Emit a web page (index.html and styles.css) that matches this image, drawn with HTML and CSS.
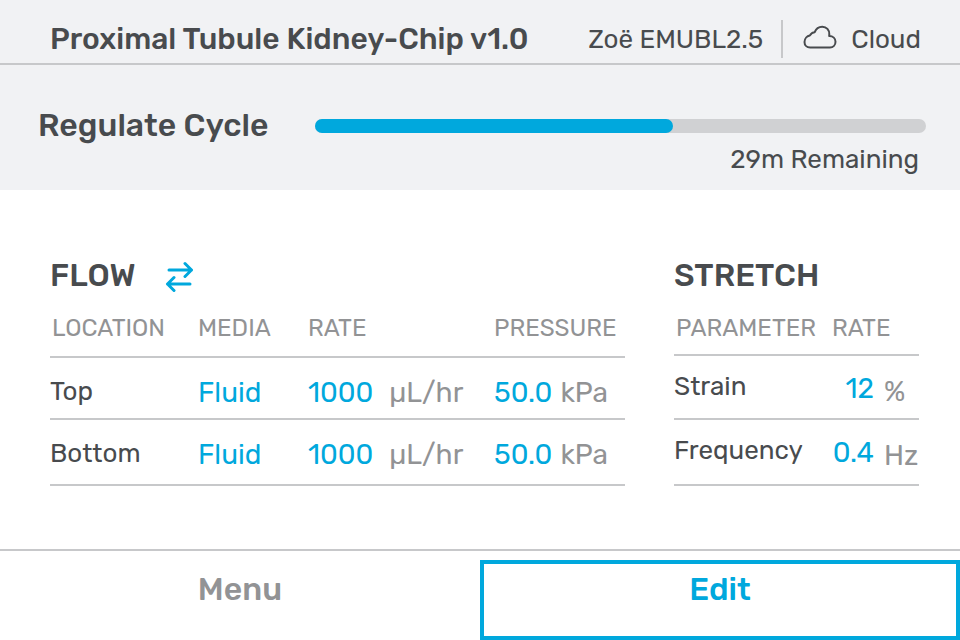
FILE: index.html
```html
<!DOCTYPE html>
<html lang="en">
<head>
<meta charset="utf-8">
<title>Proximal Tubule Kidney-Chip</title>
<link rel="stylesheet" href="styles.css">
</head>
<body>
<header class="topbar">
  <h1 class="chip-name">Proximal Tubule Kidney-Chip v1.0</h1>
  <span class="user">Zoë EMUBL2.5</span>
  <span class="cloud">
    <svg class="cloud-icon" viewBox="0 0 34 24" aria-hidden="true"><path d="M7.200 22.500C3.500 22.500 1.500 20 1.500 17C1.500 13.300 4.200 11 6.800 10.500C8 8.500 9.500 7.300 11.700 7.200C13 3.700 15.800 1.700 19.300 1.700C23.500 1.700 26.500 5 26.300 9.300L26.200 11C30 11 32.500 13.500 32.500 16.800C32.500 20 30.200 22.500 27 22.500Z"/></svg>
    Cloud
  </span>
</header>
<section class="cycle">
  <h2 class="cycle-name" id="cycle-name">Regulate Cycle</h2>
  <div class="progress">
    <div class="track" role="progressbar" aria-labelledby="cycle-name" aria-valuenow="59" aria-valuemin="0" aria-valuemax="100"><div class="fill" style="width:58.6%"></div></div>
    <p class="remaining">29m Remaining</p>
  </div>
</section>
<main class="content">
  <section class="flow">
    <h2 class="title">FLOW
      <svg class="swap-icon" viewBox="0 0 28 32" aria-hidden="true"><path d="M4 9H26.500M20 2.500L26.500 9L20 15.500M25 23H2.500M9 16.500L2.500 23L9 29.500"/></svg>
    </h2>
    <table class="readings">
      <colgroup><col class="c-location"><col class="c-media"><col class="c-rate"><col class="c-pressure"></colgroup>
      <thead><tr><th>LOCATION</th><th>MEDIA</th><th>RATE</th><th>PRESSURE</th></tr></thead>
      <tbody>
        <tr><td class="name">Top</td><td class="value">Fluid</td><td class="value">1000<span class="unit wide">µL/hr</span></td><td class="value">50.0<span class="unit">kPa</span></td></tr>
        <tr><td class="name">Bottom</td><td class="value">Fluid</td><td class="value">1000<span class="unit wide">µL/hr</span></td><td class="value">50.0<span class="unit">kPa</span></td></tr>
      </tbody>
    </table>
  </section>
  <section class="stretch">
    <h2 class="title">STRETCH</h2>
    <table class="readings">
      <colgroup><col class="c-parameter"><col class="c-amount"></colgroup>
      <thead><tr><th>PARAMETER</th><th>RATE</th></tr></thead>
      <tbody>
        <tr><td class="name">Strain</td><td class="value"><div class="pair"><span class="amount">12</span><span class="unit">%</span></div></td></tr>
        <tr><td class="name">Frequency</td><td class="value"><div class="pair"><span class="amount">0.4</span><span class="unit">Hz</span></div></td></tr>
      </tbody>
    </table>
  </section>
</main>
<footer class="actions">
  <button class="action" type="button">Menu</button>
  <button class="action selected" type="button">Edit</button>
</footer>
</body>
</html>
```
FILE: styles.css
```css
* { box-sizing: border-box; }
body {
  margin: 0;
  min-height: 100vh;
  display: flex;
  flex-direction: column;
  background: #fff;
  color: #484b4e;
  font-family: Rubik, Roboto, sans-serif;
}
h1, h2, p { margin: 0; font-weight: 500; }
.topbar {
  display: flex;
  align-items: center;
  height: 65px;
  padding: 15px 39px 0 50px;
  background: #f1f2f4;
  border-bottom: 2px solid #c7c8ca;
  font-size: 26px;
}
.chip-name { flex: 1; font-size: 30px; line-height: 36px; }
.user { padding-right: 18px; }
.cloud {
  display: flex;
  align-items: center;
  gap: 14px;
  height: 38px;
  padding-left: 20px;
  border-left: 2px solid #c7c8ca;
}
.cloud-icon { width: 34px; height: 24px; margin-bottom: 4px; fill: none; stroke: #484b4e; stroke-width: 2; stroke-linejoin: round; }
.cycle {
  display: flex;
  gap: 47px;
  height: 125px;
  padding: 40px 34px 0 38px;
  background: #f1f2f4;
}
.cycle-name { font-size: 32px; line-height: 40px; }
.progress { flex: 1; padding-top: 14px; }
.track { height: 14px; border-radius: 7px; background: #d0d1d3; }
.fill { height: 100%; border-radius: 7px; background: #00a8dd; }
.remaining { padding: 11px 7px 0 0; font-size: 26px; line-height: 32px; font-weight: 400; text-align: right; }
.content {
  flex: 1;
  display: flex;
  gap: 49px;
  padding: 65px 41px 0 50px;
}
.flow { flex: 575; }
.stretch { flex: 245; }
.title { display: flex; align-items: center; gap: 29px; height: 40px; font-size: 32px; }
.swap-icon { width: 28px; height: 32px; margin-top: 4px; fill: none; stroke: #00a8dd; stroke-width: 3; stroke-linecap: round; stroke-linejoin: round; }
.readings { width: 100%; table-layout: fixed; border-collapse: collapse; }
.c-location { width: 148px; }
.c-media { width: 110px; }
.c-rate { width: 186px; }
.c-parameter { width: 158px; }
th, td {
  padding: 0;
  text-align: left;
  vertical-align: top;
  white-space: nowrap;
  border-bottom: 2px solid #c7c8ca;
}
th { height: 62px; padding-top: 19px; font-size: 24px; line-height: 28px; font-weight: 400; color: #929395; }
th:first-child { padding-left: 2px; }
td { height: 62px; padding-top: 19px; font-size: 28px; line-height: 32px; }
tr:last-child td { height: 66px; }
td.name { padding-top: 18px; font-size: 26px; }
.value { color: #00a8dd; }
.unit { padding-left: 8px; color: #929395; }
.wide { padding-left: 16px; }
.stretch th { height: 60px; }
.stretch td { height: 64px; padding-top: 17px; }
.stretch td.name { padding-top: 15px; }
.stretch tr:last-child td { height: 66px; }
.pair { display: flex; }
.amount { width: 42px; text-align: right; }
.pair .unit { padding: 3px 0 0 10px; }
.actions {
  display: flex;
  height: 91px;
  padding-top: 9px;
  border-top: 2px solid #c7c8ca;
}
.action {
  flex: 1;
  padding: 0 0 22px;
  border: 4px solid transparent;
  background: none;
  color: #929395;
  font: 500 32px Rubik, Roboto, sans-serif;
}
.selected { border-color: #00a8dd; color: #00a8dd; }
```
